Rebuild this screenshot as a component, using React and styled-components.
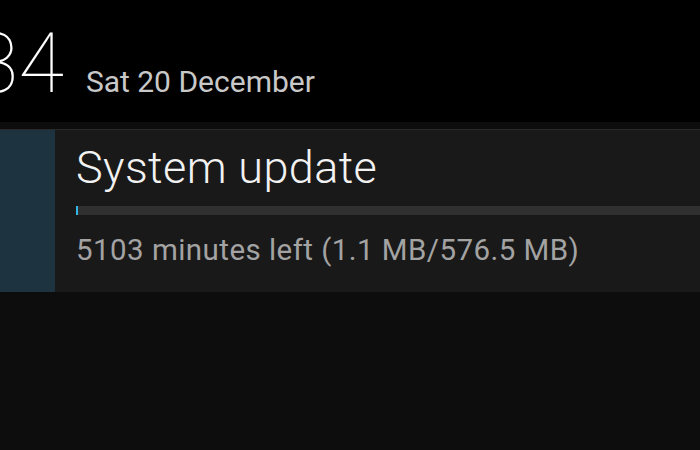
import styled, { createGlobalStyle } from 'styled-components';

const GlobalStyle = createGlobalStyle`
  html, body {
    margin: 0;
    padding: 0;
    background: #0d0d0d;
    font-family: Roboto, "Noto Sans", "Liberation Sans", sans-serif;
  }
`;

const Screen = styled.div`
  width: 700px;
  height: 450px;
  overflow: hidden;
  background: #0d0d0d;
`;

const Header = styled.header`
  height: 122px;
  box-sizing: border-box;
  padding-top: 22px;
  background: #000;
  display: flex;
  align-items: baseline;
  gap: 22px;
`;

const Clock = styled.span`
  margin-left: -27px;
  font-size: 83px;
  line-height: 83px;
  font-weight: 100;
  color: #fff;
`;

const DateLabel = styled.span`
  font-size: 30px;
  line-height: 34px;
  color: #c8c8c8;
`;

const List = styled.div`
  padding-top: 7px;
`;

const Card = styled.div`
  display: flex;
  height: 163px;
  box-sizing: border-box;
  border-top: 1px solid #2a2a2a;
  background: #191919;
`;

const IconArea = styled.div`
  width: 55px;
  flex: none;
  background: #1d3440;
`;

const Body = styled.div`
  flex: 1;
  padding: 12px 0 0 21px;
  min-width: 0;
`;

const Title = styled.div`
  font-size: 45px;
  line-height: 52px;
  font-weight: 300;
  letter-spacing: 0.4px;
  color: #f2f2f2;
`;

const Track = styled.div`
  margin-top: 12px;
  height: 9px;
  background: #303030;
  display: flex;
`;

const Fill = styled.div`
  background: #33b5e5;
`;

const Status = styled.div`
  margin-top: 18px;
  font-size: 29.5px;
  line-height: 34px;
  letter-spacing: 0.45px;
  color: #a3a3a3;
  white-space: nowrap;
`;

export default function App() {
  const done = 1.1;
  const total = 576.5;
  return (
    <Screen>
      <GlobalStyle />
      <Header>
        <Clock>34</Clock>
        <DateLabel>Sat 20 December</DateLabel>
      </Header>
      <List>
        <Card>
          <IconArea />
          <Body>
            <Title>System update</Title>
            <Track>
              <Fill style={{ width: `${Math.max(2, (done / total) * 100)}px` }} />
            </Track>
            <Status>5103 minutes left (1.1 MB/576.5 MB)</Status>
          </Body>
        </Card>
      </List>
    </Screen>
  );
}
